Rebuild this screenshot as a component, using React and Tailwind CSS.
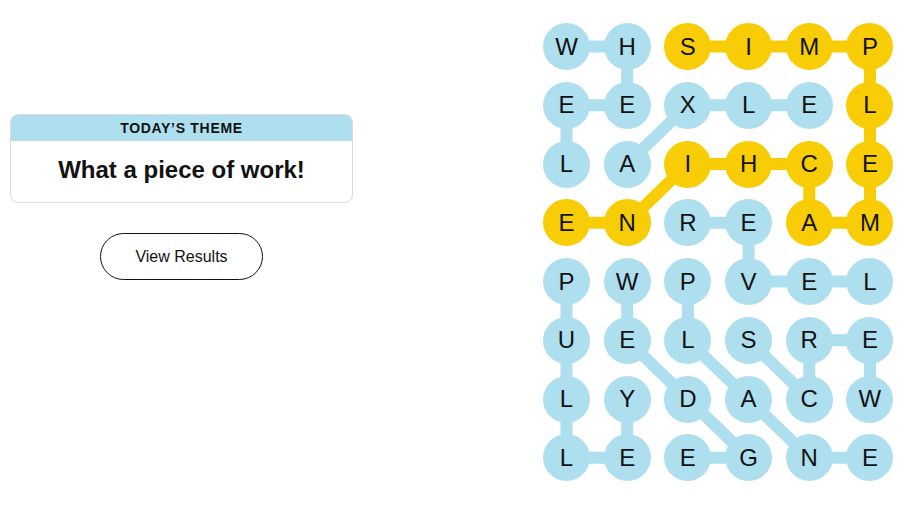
import React from 'react';

const BLUE = '#aedfee';
const YELLOW = '#f8cd05';

const letters = [
  'WHSIMP',
  'EEXLEL',
  'LAIHCE',
  'ENREAM',
  'PWPVEL',
  'UELSRE',
  'LYDACW',
  'LEEGNE',
];

// words as paths of [row, col]
const blueWords = [
  [[0, 0], [0, 1], [1, 1], [1, 0], [2, 0]], // WHEEL
  [[2, 1], [1, 2], [1, 3], [1, 4]], // AXLE
  [[3, 2], [3, 3], [4, 3], [4, 4], [4, 5]], // REVEL
  [[4, 0], [5, 0], [6, 0], [7, 0], [7, 1], [6, 1]], // PULLEY
  [[4, 1], [5, 1], [6, 2], [7, 3], [7, 2]], // WEDGE
  [[4, 2], [5, 2], [6, 3], [7, 4], [7, 5]], // PLANE
  [[5, 3], [6, 4], [5, 4], [5, 5], [6, 5]], // SCREW
];

const spangram = [
  [0, 2], [0, 3], [0, 4], [0, 5], [1, 5], [2, 5], [3, 5], [3, 4],
  [2, 4], [2, 3], [2, 2], [3, 1], [3, 0],
];

const CELL = 47;
const GAP_X = 13.7;
const GAP_Y = 11.76;
const W = 6 * CELL + 5 * GAP_X;
const H = 8 * CELL + 7 * GAP_Y;

const cx = (c) => CELL / 2 + c * (CELL + GAP_X);
const cy = (r) => CELL / 2 + r * (CELL + GAP_Y);

const yellowSet = new Set(spangram.map(([r, c]) => `${r}-${c}`));

const toPoints = (path) => path.map(([r, c]) => `${cx(c)},${cy(r)}`).join(' ');

const Board = () => (
  <div className="relative" style={{ width: W, height: H }}>
    <svg className="absolute inset-0" width={W} height={H}>
      {blueWords.map((w, i) => (
        <polyline key={i} points={toPoints(w)} fill="none" stroke={BLUE} strokeWidth="12" strokeLinejoin="round" />
      ))}
      <polyline points={toPoints(spangram)} fill="none" stroke={YELLOW} strokeWidth="12" strokeLinejoin="round" />
    </svg>
    <div className="relative grid grid-cols-[repeat(6,47px)] grid-rows-[repeat(8,47px)] gap-x-[13.7px] gap-y-[11.76px]">
      {letters.map((row, r) =>
        row.split('').map((ch, c) => (
          <div
            key={`${r}-${c}`}
            className={`flex h-[47px] w-[47px] items-center justify-center rounded-full text-[24px] text-[#121212] ${
              yellowSet.has(`${r}-${c}`) ? 'bg-[#f8cd05]' : 'bg-[#aedfee]'
            }`}
          >
            {ch}
          </div>
        ))
      )}
    </div>
  </div>
);

export default function App() {
  return (
    <div className="flex h-[508px] w-[903px] bg-white font-['Liberation_Sans',Arial,sans-serif] text-[#121212]">
      {/* Left column */}
      <div className="ml-[10px] mt-[114px] flex w-[343px] flex-col items-center">
        <div className="w-full overflow-hidden rounded-lg border border-[#dcdcdc]">
          <div className="flex h-[26px] items-center justify-center bg-[#aedfee] text-[14px] font-semibold tracking-[0.7px]">
            TODAY’S THEME
          </div>
          <div className="flex h-[61px] items-center justify-center pb-[3px] text-[24px] font-bold">
            What a piece of work!
          </div>
        </div>
        <button className="mt-[30px] flex h-[47px] w-[163px] items-center justify-center rounded-full border border-[#121212] bg-white text-[16px]">
          View Results
        </button>
      </div>

      {/* Board */}
      <div className="ml-[190px] mt-[23px]">
        <Board />
      </div>
    </div>
  );
}
